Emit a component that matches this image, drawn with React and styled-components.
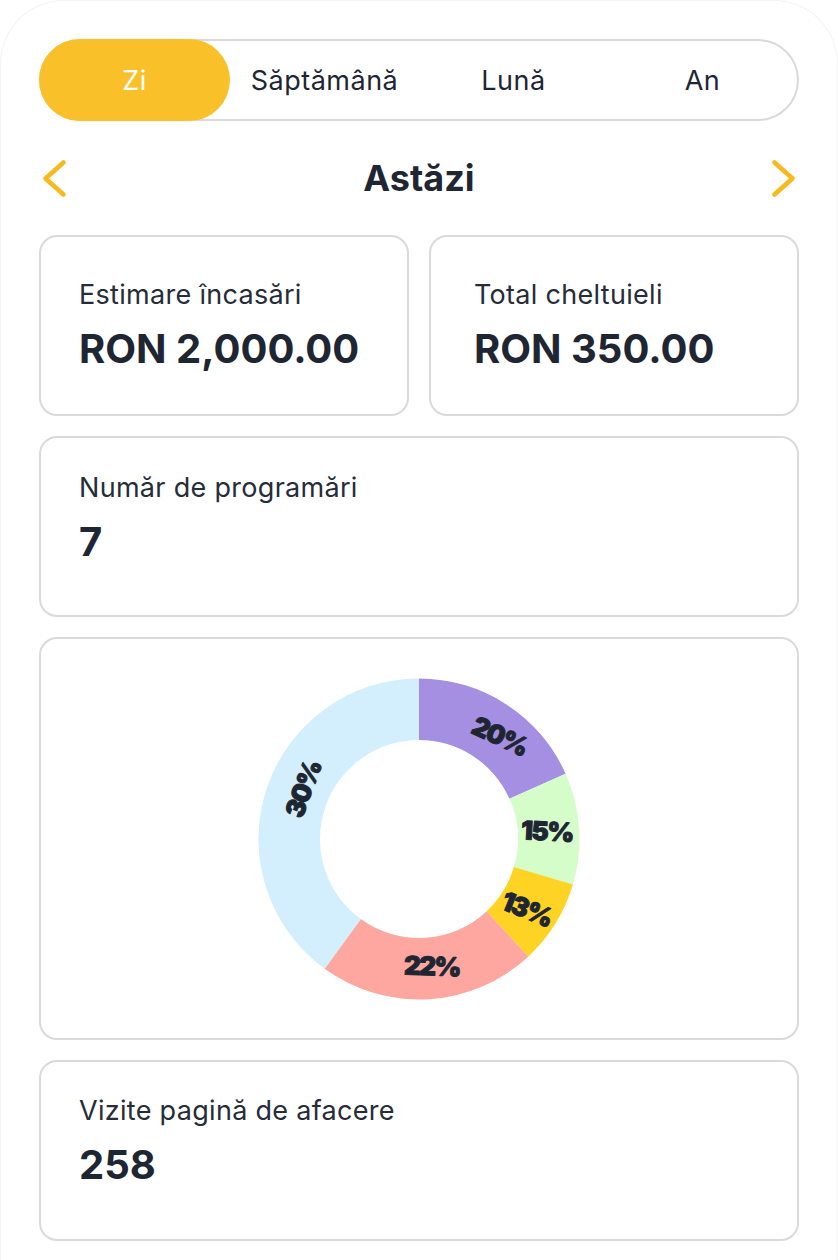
import React, { useState } from "react"
import styled, { createGlobalStyle } from "styled-components"

const colors = {
    text: "#1f2633",
    label: "#262c38",
    border: "#dadada",
    yellow: "#f9c02a",
    arrow: "#f6b91e",
}

const GlobalStyle = createGlobalStyle`
    html, body{
        margin:0;
        padding:0;
        background:#ffffff;
    }
    body{
        font-family:Inter, "Noto Sans", sans-serif;
        color:${colors.text};
    }
`

const tabs = ["Zi", "Săptămână", "Lună", "An"]

// segments: angle where each one starts/ends (degrees, clockwise from top)
const segments = [
    { color: "#a58fe3", from: 0, to: 66, label: "20%", dx: 81, dy: -103, rot: 25 },
    { color: "#d5fdc9", from: 66, to: 106.5, label: "15%", dx: 128, dy: -8, rot: 3 },
    { color: "#ffd324", from: 106.5, to: 137, label: "13%", dx: 108, dy: 70, rot: 22 },
    { color: "#fea7a0", from: 137, to: 216, label: "22%", dx: 13, dy: 127, rot: 2 },
    { color: "#d3eefc", from: 216, to: 360, label: "30%", dx: -116, dy: -50, rot: -70 },
]

function point(cx, cy, r, deg) {
    const a = (deg * Math.PI) / 180
    return [cx + r * Math.sin(a), cy - r * Math.cos(a)]
}

function arcPath(cx, cy, R, r, a0, a1) {
    const large = a1 - a0 > 180 ? 1 : 0
    const [x0, y0] = point(cx, cy, R, a0)
    const [x1, y1] = point(cx, cy, R, a1)
    const [x2, y2] = point(cx, cy, r, a1)
    const [x3, y3] = point(cx, cy, r, a0)
    return `M${x0} ${y0} A${R} ${R} 0 ${large} 1 ${x1} ${y1} L${x2} ${y2} A${r} ${r} 0 ${large} 0 ${x3} ${y3} Z`
}

function Donut() {
    const size = 324
    const c = size / 2
    return (
        <svg width={size} height={size} viewBox={`0 0 ${size} ${size}`}>
            {segments.map((s) => (
                <path key={s.label} d={arcPath(c, c, 160.5, 99, s.from, s.to)} fill={s.color} />
            ))}
            {segments.map((s) => (
                <text
                    key={"t" + s.label}
                    x={c + s.dx}
                    y={c + s.dy}
                    textAnchor="middle"
                    dominantBaseline="central"
                    transform={`rotate(${s.rot} ${c + s.dx} ${c + s.dy})`}
                    fontFamily="Inter, sans-serif"
                    fontWeight="900"
                    fontSize="26"
                    letterSpacing="-1.6"
                    fill={colors.text}
                    stroke={colors.text}
                    strokeWidth="1"
                    strokeLinejoin="round"
                >
                    {s.label}
                </text>
            ))}
        </svg>
    )
}

function Chevron({ dir }) {
    const d = dir === "left" ? "M24.5 4.5 L6.5 20.5 L24.5 36.5" : "M6.5 4.5 L24.5 20.5 L6.5 36.5"
    return (
        <svg width="31" height="41" viewBox="0 0 31 41">
            <path d={d} fill="none" stroke={colors.arrow} strokeWidth="4.6" strokeLinecap="round" strokeLinejoin="round" />
        </svg>
    )
}

function App() {
    const [active, setActive] = useState(0)

    return (
        <>
            <GlobalStyle />
            <Page>
                <TabBar>
                    {tabs.map((t, i) => (
                        <Tab key={t} $active={i === active} onClick={() => setActive(i)}>{t}</Tab>
                    ))}
                </TabBar>

                <DateRow>
                    <ArrowButton><Chevron dir="left" /></ArrowButton>
                    <Title>Astăzi</Title>
                    <ArrowButton><Chevron dir="right" /></ArrowButton>
                </DateRow>

                <CardGrid>
                    <StatCard>
                        <StatLabel>Estimare încasări</StatLabel>
                        <StatValue>RON 2,000.00</StatValue>
                    </StatCard>
                    <StatCard $padX={43}>
                        <StatLabel>Total cheltuieli</StatLabel>
                        <StatValue>RON 350.00</StatValue>
                    </StatCard>
                </CardGrid>

                <StatCard $padTop={35}>
                    <StatLabel>Număr de programări</StatLabel>
                    <StatValue>7</StatValue>
                </StatCard>

                <ChartCard>
                    <Donut />
                </ChartCard>

                <StatCard $padTop={34}>
                    <StatLabel>Vizite pagină de afacere</StatLabel>
                    <StatValue>258</StatValue>
                </StatCard>
            </Page>
        </>
    )
}

export default App

const Page = styled.div`
    box-sizing:border-box;
    width:838px;
    min-height:1260px;
    padding:39px 38px 18px;
    border:1px solid #f3f3f3;
    border-bottom:none;
    border-radius:64px 64px 0 0;
    display:flex;
    flex-direction:column;
    gap:20px;
`
const TabBar = styled.div`
    box-sizing:border-box;
    height:82px;
    border:2px solid ${colors.border};
    border-radius:41px;
    display:grid;
    grid-template-columns:repeat(4, 1fr);
    margin-top:-1px;
    margin-bottom:6px;
`
const Tab = styled.button`
    border:none;
    margin:-2px 0 -2px ${props => props.$active ? "-2px" : "0"};
    border-radius:41px;
    background:${props => props.$active ? colors.yellow : "transparent"};
    color:${props => props.$active ? "#ffffff" : colors.text};
    font-family:Inter, sans-serif;
    font-size:27px;
    letter-spacing:0.5px;
    font-weight:400;
    cursor:pointer;
    padding:0;
`
const DateRow = styled.div`
    height:62px;
    display:flex;
    align-items:center;
    justify-content:space-between;
    margin-bottom:6px;
`
const ArrowButton = styled.div`
    width:31px;
    height:41px;
    display:flex;
`
const Title = styled.h2`
    margin:0;
    font-size:36px;
    font-weight:700;
    color:${colors.text};
`
const CardGrid = styled.div`
    display:grid;
    grid-template-columns:1fr 1fr;
    gap:20px;
`
const StatCard = styled.div`
    box-sizing:border-box;
    height:181px;
    border:2px solid ${colors.border};
    border-radius:18px;
    padding:${props => props.$padTop ?? 43}px ${props => props.$padX ?? 38}px 0;
    display:flex;
    flex-direction:column;
`
const StatLabel = styled.div`
    font-size:27px;
    line-height:30px;
    letter-spacing:0.3px;
    color:${colors.label};
`
const StatValue = styled.div`
    margin-top:15px;
    font-size:40px;
    line-height:48px;
    font-weight:700;
    color:${colors.text};
`
const ChartCard = styled.div`
    box-sizing:border-box;
    height:403px;
    border:2px solid ${colors.border};
    border-radius:18px;
    display:flex;
    align-items:center;
    justify-content:center;
`
